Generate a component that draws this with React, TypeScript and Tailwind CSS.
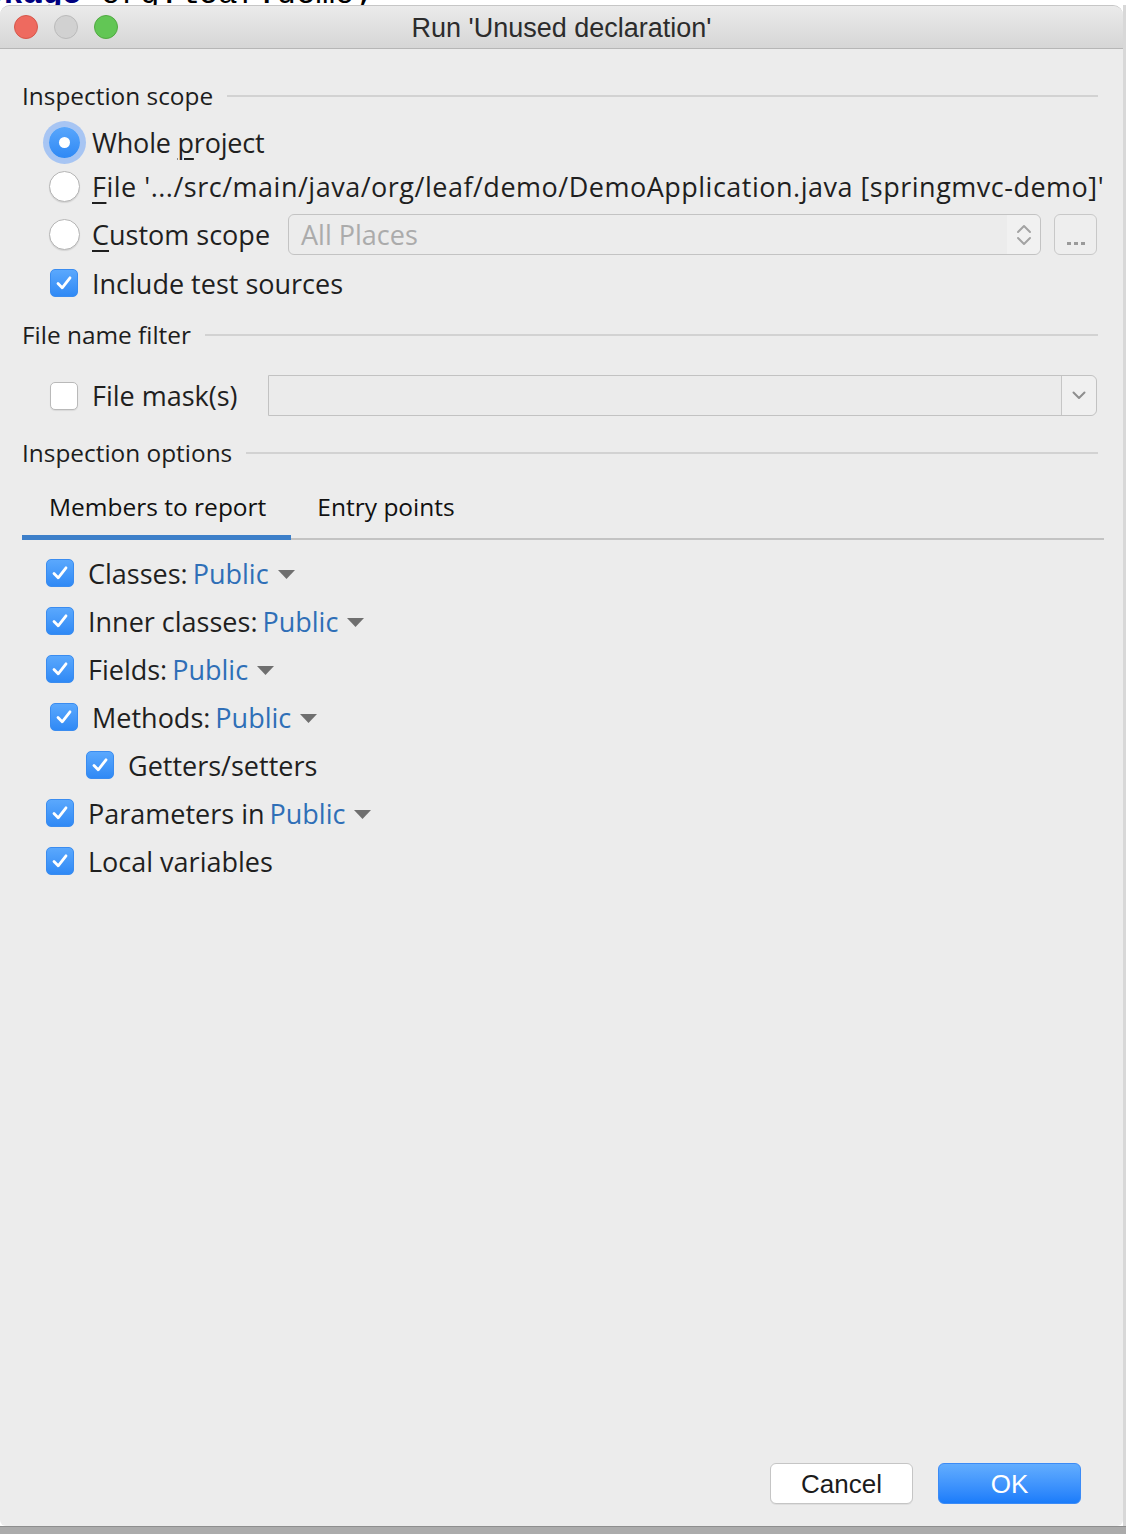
import React from 'react';

const ui = "font-['Open_Sans',sans-serif]";
const mac = "font-['Liberation_Sans',Arial,sans-serif]";

function Checkbox({ checked }: { checked: boolean }) {
  if (!checked) {
    return (
      <div className="w-[28px] h-[28px] shrink-0 rounded-[5px] bg-white border border-[#b9b9b9] shadow-[0_1px_1px_rgba(0,0,0,0.08)]" />
    );
  }
  return (
    <div className="w-[28px] h-[28px] shrink-0 rounded-[5px] bg-linear-to-b from-[#5aa8fd] to-[#2f89f5] border border-[#3a8cf0] flex items-center justify-center">
      <svg width="22" height="22" viewBox="0 0 22 22" fill="none">
        <path d="M5 11.5 L9.2 15.8 L17 5.8" stroke="white" strokeWidth="2.8" strokeLinecap="round" strokeLinejoin="round" />
      </svg>
    </div>
  );
}

function Radio({ checked }: { checked: boolean }) {
  if (checked) {
    return (
      <div className="w-[31px] h-[31px] shrink-0 rounded-full bg-linear-to-b from-[#58a6fc] to-[#2f89f5] ring-[6px] ring-[#a7c5f3] flex items-center justify-center">
        <div className="w-[11px] h-[11px] rounded-full bg-white" />
      </div>
    );
  }
  return (
    <div className="w-[31px] h-[31px] shrink-0 rounded-full bg-white border border-[#b5b5b5] shadow-[0_1px_1px_rgba(0,0,0,0.1)]" />
  );
}

function SectionHeader({ title, mt }: { title: string; mt: string }) {
  return (
    <div className={`${mt} h-[40px] flex items-center gap-[14px] mr-[3px]`}>
      <span className="text-[24.4px] leading-none text-[#1d1d1d] whitespace-nowrap">{title}</span>
      <div className="flex-1 h-[2px] bg-[#d2d2d2]" />
    </div>
  );
}

function Caret() {
  return (
    <svg width="17" height="9" viewBox="0 0 17 9" className="ml-[9px] mt-[2px]">
      <polygon points="0,0 17,0 8.5,9" fill="#6f6f6f" />
    </svg>
  );
}

const members = [
  { label: 'Classes:', value: 'Public', indent: 'ml-[24px]' },
  { label: 'Inner classes:', value: 'Public', indent: 'ml-[24px]' },
  { label: 'Fields:', value: 'Public', indent: 'ml-[24px]' },
  { label: 'Methods:', value: 'Public', indent: 'ml-[28px]' },
  { label: 'Getters/setters', value: '', indent: 'ml-[64px]' },
  { label: 'Parameters in', value: 'Public', indent: 'ml-[24px]' },
  { label: 'Local variables', value: '', indent: 'ml-[24px]' },
];

export default function App() {
  return (
    <div className="w-[1126px] h-[1534px] flex flex-col overflow-hidden bg-[#b0b0b0]">
      {/* editor behind the dialog */}
      <div className="h-[5px] shrink-0 bg-white overflow-hidden flex flex-col justify-end">
        <div className="ml-[-55px] whitespace-nowrap font-['Liberation_Mono',monospace] text-[32.5px] leading-[20px] text-black">
          <span className="font-bold text-[#000080]">package</span> org.leaf.demo;
        </div>
      </div>

      <div className="flex flex-1 min-h-0 bg-white">
        <div className={`w-[1123px] flex flex-col bg-[#ececec] rounded-t-[10px] rounded-b-[6px] overflow-hidden border-t border-[#c6c6c6] ${ui}`}>
          {/* title bar */}
          <div className="h-[43px] shrink-0 grid grid-cols-[1fr_auto_1fr] items-center bg-linear-to-b from-[#ebebeb] to-[#d6d6d6] border-b border-[#b6b6b6]">
            <div className="flex items-center gap-[16px] pl-[14px]">
              <div className="w-[24px] h-[24px] rounded-full bg-[#ee6a5f] border border-[#d5574b]" />
              <div className="w-[24px] h-[24px] rounded-full bg-[#d1d1d1] border border-[#bababa]" />
              <div className="w-[24px] h-[24px] rounded-full bg-[#62c655] border border-[#51a942]" />
            </div>
            <div className={`${mac} text-[27px] leading-none text-[#2c2c2c] mt-[2px]`}>Run 'Unused declaration'</div>
            <div />
          </div>

          {/* body */}
          <div className="flex-1 flex flex-col px-[22px] text-[#1f1f1f]">
            <SectionHeader title="Inspection scope" mt="mt-[27px]" />

            <div className="mt-[6px] h-[40px] flex items-center ml-[27px]">
              <Radio checked />
              <span className="ml-[12px] text-[27px] leading-none tracking-[-0.2px]">
                Whole <span className="underline underline-offset-[5px] decoration-[1.5px]">p</span>roject
              </span>
            </div>

            <div className="mt-[4px] h-[40px] flex items-center ml-[27px]">
              <Radio checked={false} />
              <span className="ml-[12px] text-[27px] leading-none whitespace-nowrap tracking-[0.5px]">
                <span className="underline underline-offset-[5px] decoration-[1.5px]">F</span>ile '.../src/main/java/org/leaf/demo/DemoApplication.java [springmvc-demo]'
              </span>
            </div>

            <div className="mt-[8px] h-[41px] flex items-center ml-[27px] mr-[4px]">
              <Radio checked={false} />
              <span className="ml-[12px] text-[27px] leading-none whitespace-nowrap">
                <span className="underline underline-offset-[5px] decoration-[1.5px]">C</span>ustom scope
              </span>
              <div className="ml-[18px] flex-1 h-[41px] flex items-center border border-[#c3c3c3] rounded-[6px] bg-[#ececec]">
                <span className="flex-1 pl-[12px] text-[27px] leading-none text-[#ababab]">All Places</span>
                <div className="w-[33px] h-full rounded-r-[6px] bg-[#f1f1f1] flex items-center justify-center">
                  <svg width="16" height="26" viewBox="0 0 16 26" fill="none">
                    <path d="M2 10 L8 4 L14 10" stroke="#a3a3a3" strokeWidth="2" strokeLinecap="round" strokeLinejoin="round" />
                    <path d="M2 16 L8 22 L14 16" stroke="#a3a3a3" strokeWidth="2" strokeLinecap="round" strokeLinejoin="round" />
                  </svg>
                </div>
              </div>
              <div className="ml-[13px] w-[43px] h-[41px] border border-[#c8c8c8] rounded-[6px] bg-[#eeeeee] flex items-end justify-center pb-[9px] gap-[3px]">
                <div className="w-[4px] h-[3px] bg-[#9a9a9a]" />
                <div className="w-[4px] h-[3px] bg-[#9a9a9a]" />
                <div className="w-[4px] h-[3px] bg-[#9a9a9a]" />
              </div>
            </div>

            <div className="mt-[8px] h-[40px] flex items-center ml-[28px]">
              <Checkbox checked />
              <span className="ml-[14px] text-[27px] leading-none">Include test sources</span>
            </div>

            <SectionHeader title="File name filter" mt="mt-[12px]" />

            <div className="mt-[20px] h-[41px] flex items-center ml-[28px] mr-[4px]">
              <Checkbox checked={false} />
              <span className="ml-[14px] text-[27px] leading-none whitespace-nowrap">File mask(s)</span>
              <div className="ml-[30px] flex-1 h-[41px] flex border border-[#c2c2c2] rounded-r-[6px] bg-[#ebebeb]">
                <div className="flex-1" />
                <div className="w-[35px] h-full border-l border-[#c6c6c6] rounded-r-[6px] bg-[#f0f0f0] flex items-center justify-center">
                  <svg width="14" height="9" viewBox="0 0 14 9" fill="none">
                    <path d="M1.5 1.5 L7 7 L12.5 1.5" stroke="#8e8e8e" strokeWidth="2" strokeLinecap="round" strokeLinejoin="round" />
                  </svg>
                </div>
              </div>
            </div>

            <SectionHeader title="Inspection options" mt="mt-[17px]" />

            {/* tabs */}
            <div className="mt-[7px] -mr-[3px] flex border-b-2 border-[#c3c3c3]">
              <div className="h-[60px] -mb-[2px] pl-[27px] pr-[25px] flex items-center border-b-[5px] border-[#3d7fc9]">
                <span className="text-[24.5px] leading-none text-[#111111]">Members to report</span>
              </div>
              <div className="h-[60px] -mb-[2px] pl-[26px] pr-[25px] flex items-center border-b-[5px] border-transparent">
                <span className="text-[24.5px] leading-none text-[#111111]">Entry points</span>
              </div>
            </div>

            <div className="mt-[9px] flex flex-col">
              {members.map((m) => (
                <div key={m.label} className={`h-[48px] flex items-center ${m.indent}`}>
                  <Checkbox checked />
                  <span className="ml-[14px] text-[27px] leading-none whitespace-nowrap">{m.label}</span>
                  {m.value && (
                    <>
                      <span className="ml-[5px] text-[27px] leading-none text-[#2f6fb7]">{m.value}</span>
                      <Caret />
                    </>
                  )}
                </div>
              ))}
            </div>

            {/* buttons */}
            <div className={`mt-auto mb-[22px] mr-[20px] flex justify-end gap-[25px] ${mac}`}>
              <button className="w-[143px] h-[41px] rounded-[6px] bg-white border border-[#c5c5c5] shadow-[0_1px_0_rgba(0,0,0,0.06)] text-[26px] leading-none text-[#1b1b1b]">
                Cancel
              </button>
              <button className="w-[143px] h-[41px] rounded-[6px] bg-linear-to-b from-[#62adfe] to-[#1a7cfa] border border-[#3b8bf6] text-[26px] leading-none text-white">
                OK
              </button>
            </div>
          </div>
        </div>
        <div className="flex-1 bg-[#d8d8d8]" />
      </div>

      <div className="h-[8px] shrink-0 bg-[#ababab] border-t border-[#8e8e8e]" />
    </div>
  );
}
